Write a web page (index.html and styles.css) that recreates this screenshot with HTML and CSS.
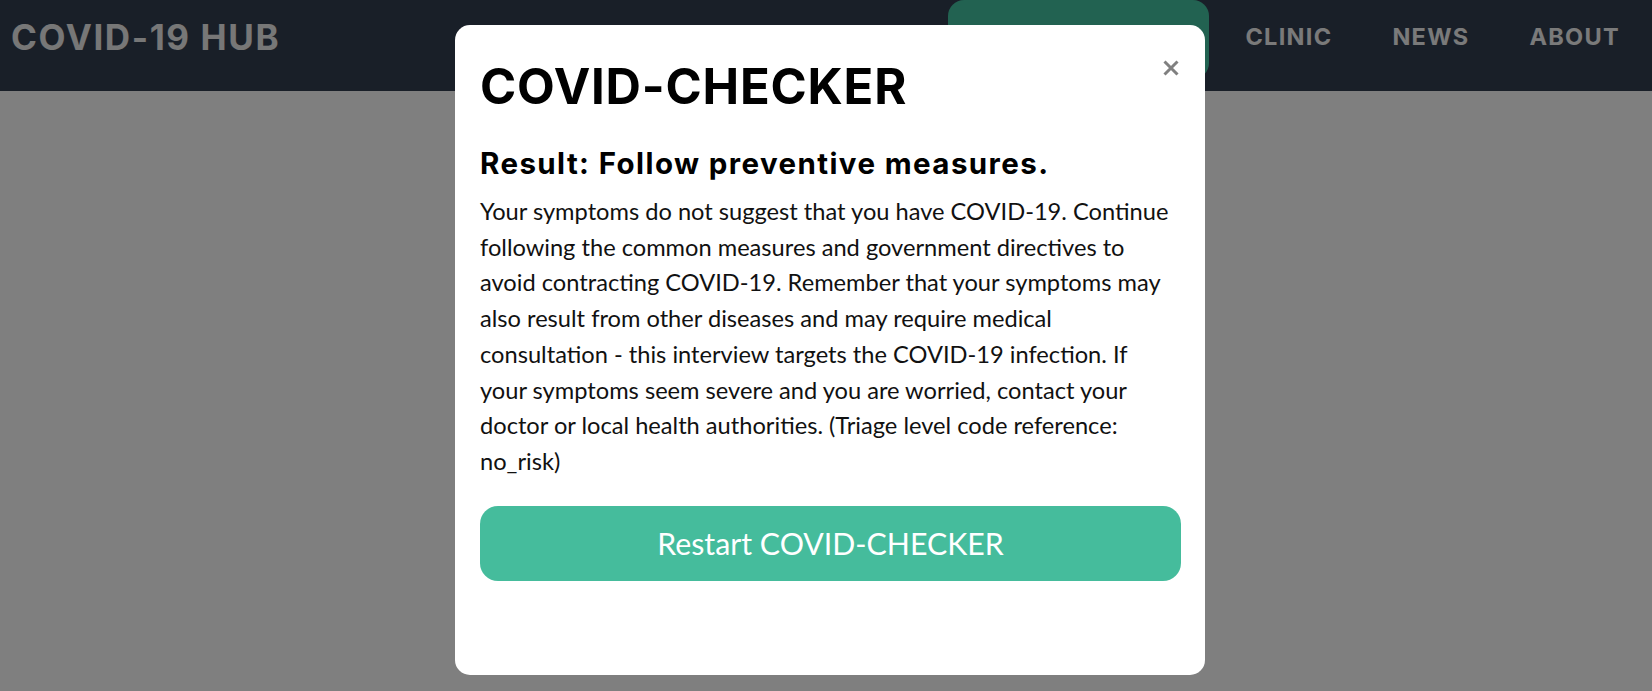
FILE: index.html
```html
<!DOCTYPE html>
<html lang="en">
<head>
<meta charset="utf-8">
<title>COVID-19 HUB</title>
<link rel="stylesheet" href="styles.css">
</head>
<body>
<header class="nav">
  <a class="logo" href="#">COVID-19 HUB</a>
  <nav class="links">
    <a class="link active" href="#">COVID-CHECKER</a>
    <a class="link" href="#">CLINIC</a>
    <a class="link" href="#">NEWS</a>
    <a class="link" href="#">ABOUT</a>
  </nav>
</header>
<main class="page"></main>

<div class="backdrop">
  <section class="modal">
    <button class="close" aria-label="Close">
      <svg width="16" height="16" viewBox="0 0 16 16"><path d="M1.5 1.5 L14.5 14.5 M14.5 1.5 L1.5 14.5" stroke="#808080" stroke-width="3" stroke-linecap="butt"/></svg>
    </button>
    <h1 class="title">COVID-CHECKER</h1>
    <h2 class="result">Result: Follow preventive measures.</h2>
    <p class="text">Your symptoms do not suggest that you have COVID-19. Continue following the common measures and government directives to avoid contracting COVID-19. Remember that your symptoms may also result from other diseases and may require medical consultation - this interview targets the COVID-19 infection. If your symptoms seem severe and you are worried, contact your doctor or local health authorities. (Triage level code reference: no_risk)</p>
    <button class="restart">Restart COVID-CHECKER</button>
  </section>
</div>
</body>
</html>
```

FILE: styles.css
```css
html, body {
  margin: 0;
  padding: 0;
  height: 100%;
  overflow: hidden;
}
body {
  background: #ffffff;
  font-family: "Lato", "Liberation Sans", sans-serif;
}
.nav {
  height: 91px;
  background: #333e51;
  display: flex;
  justify-content: space-between;
  align-items: flex-start;
  box-sizing: border-box;
}
.logo {
  font-family: "Inter", "DejaVu Sans", sans-serif;
  font-weight: 700;
  font-size: 35px;
  line-height: 42px;
  color: #eeeeee;
  text-decoration: none;
  margin: 16px 0 0 11px;
  letter-spacing: 1.6px;
}
.links {
  display: flex;
  align-items: flex-start;
  margin-right: 32px;
}
.link {
  font-family: "Inter", "DejaVu Sans", sans-serif;
  font-weight: 700;
  font-size: 23.5px;
  line-height: 28px;
  color: #f4f4f4;
  text-decoration: none;
  margin-top: 23px;
  margin-left: 60px;
  letter-spacing: 1.3px;
}
.link.active {
  margin: 0 -26px 0 0;
  width: 261px;
  height: 79px;
  background: #44c4a2;
  border-radius: 16px;
  box-sizing: border-box;
  display: flex;
  align-items: center;
  justify-content: center;
}
.link.active + .link {
  margin-left: 62px;
}
.page {
  height: 600px;
}
.backdrop {
  position: fixed;
  inset: 0;
  background: rgba(0, 0, 0, 0.5);
}
.modal {
  position: absolute;
  left: 455px;
  top: 25px;
  width: 750px;
  height: 650px;
  box-sizing: border-box;
  padding: 33px 24px 0 25px;
  background: #ffffff;
  border-radius: 15px;
}
.close {
  position: absolute;
  left: 708px;
  top: 35px;
  width: 16px;
  height: 16px;
  padding: 0;
  border: 0;
  background: none;
  line-height: 0;
}
.title {
  margin: 0;
  font-family: "Inter", "DejaVu Sans", sans-serif;
  font-weight: 700;
  font-size: 49px;
  line-height: 1.2;
  color: #000;
  letter-spacing: 0.8px;
}
.result {
  margin: 28px 0 0;
  font-family: "Inter", "DejaVu Sans", sans-serif;
  font-weight: 700;
  font-size: 29.5px;
  line-height: 36px;
  color: #000;
  letter-spacing: 1.4px;
}
.text {
  margin: 13px 8px 0 0;
  font-size: 23.65px;
  line-height: 35.75px;
  color: #111;
}
.restart {
  display: block;
  width: 100%;
  height: 75px;
  margin-top: 26px;
  border: 0;
  border-radius: 18px;
  background: #45bc9c;
  color: #ffffff;
  font-family: "Lato", "Liberation Sans", sans-serif;
  font-size: 30.3px;
}
```
